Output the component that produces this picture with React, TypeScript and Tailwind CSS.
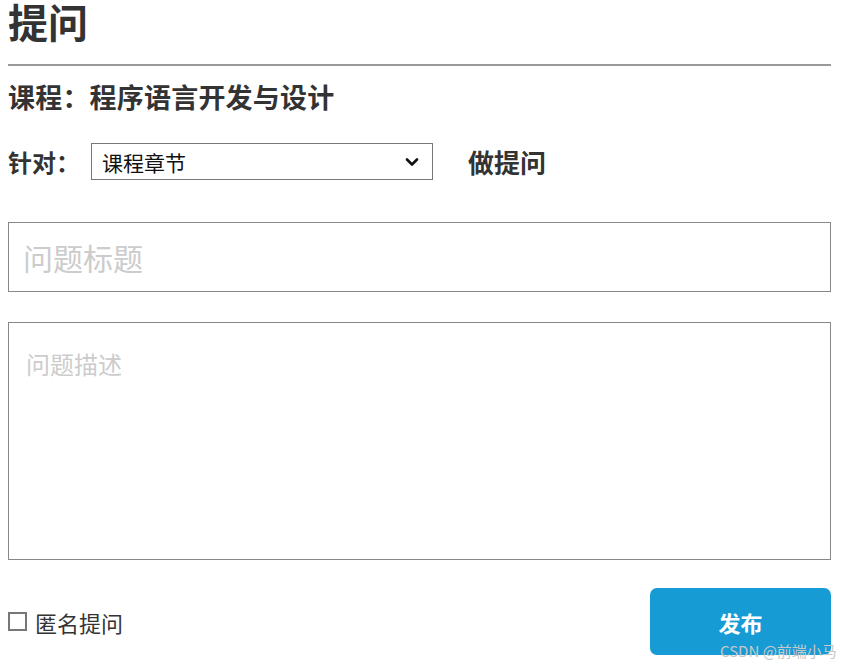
import React from "react";

const font = { fontFamily: '"Noto Sans CJK SC", "Noto Sans", sans-serif' };

export default function App() {
  return (
    <div className="relative w-[848px] h-[668px] bg-white text-[#333] overflow-hidden" style={font}>
      <div className="pl-2 w-[831px] flex flex-col">
        <h1 className="text-[40px] leading-[48px] font-bold h-[48px] -mt-[3px] m-0">提问</h1>
        <div className="mt-[19px] h-[2px] bg-[#999]" />
        <div className="mt-[17px] text-[27px] leading-[28px] font-bold tracking-[0.2px]">课程：程序语言开发与设计</div>
        <div className="mt-[32px] flex items-center h-[37px]">
          <span className="text-[24px] leading-[30px] font-bold w-[83px]">针对：</span>
          <div className="w-[342px] h-[37px] border border-[#777] flex items-center justify-between pl-[10px] pr-[10px]">
            <span className="text-[21px] leading-[24px] text-[#111]">课程章节</span>
            <svg width="16" height="12" viewBox="0 0 16 12" className="mr-[2px]">
              <path d="M3 3.5 L8 8.5 L13 3.5" fill="none" stroke="#111" strokeWidth="2.6" strokeLinecap="round" strokeLinejoin="round" />
            </svg>
          </div>
          <span className="ml-[35px] text-[26px] leading-[30px] font-bold">做提问</span>
        </div>
        <div className="mt-[42px] h-[70px] border border-[#888] flex items-center pl-[14px]">
          <span className="text-[30px] leading-[34px] text-[#ccc]">问题标题</span>
        </div>
        <div className="mt-[30px] h-[238px] border border-[#888] pl-[17px] pt-[27px]">
          <span className="text-[24px] leading-[28px] text-[#ccc]">问题描述</span>
        </div>
        <div className="mt-[28px] flex items-center justify-between h-[67px]">
          <div className="flex items-center">
            <div className="w-[19px] h-[19px] border-2 border-[#777]" />
            <span className="ml-[8px] text-[22px] leading-[26px] text-[#333]">匿名提问</span>
          </div>
          <div className="w-[181px] h-[67px] rounded-[7px] bg-[#169BD5] flex items-center justify-center">
            <span className="text-[22px] leading-[26px] font-bold text-white">发布</span>
          </div>
        </div>
      </div>
      <div className="absolute left-[720px] top-[641px] text-[15px] leading-[20px] text-[#c8c8c8]">CSDN @前端小马</div>
    </div>
  );
}
